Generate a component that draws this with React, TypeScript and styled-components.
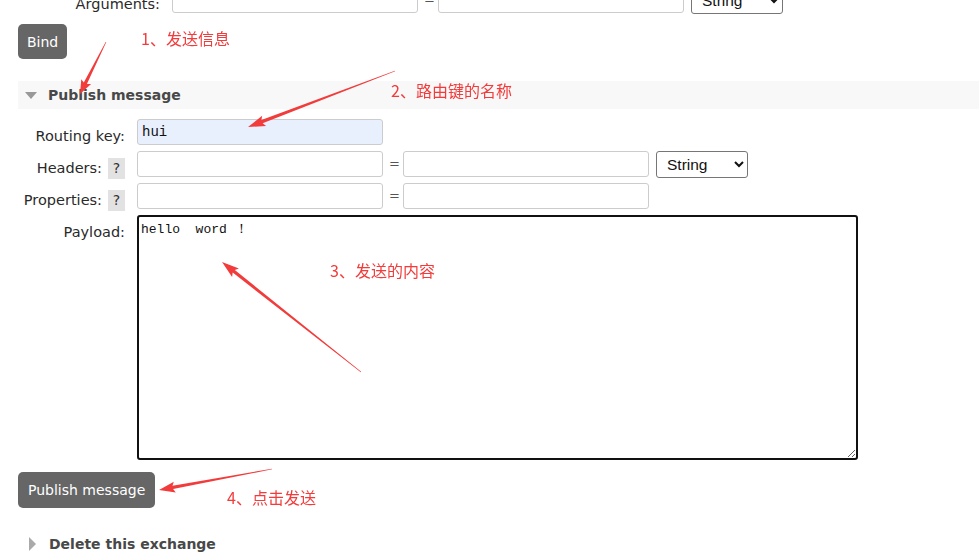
import React from "react";
import styled, { createGlobalStyle } from "styled-components";

const GlobalStyle = createGlobalStyle`
  html, body {
    margin: 0;
    padding: 0;
    background: #fff;
    overflow: hidden;
  }
  body {
    font-family: "DejaVu Sans", Verdana, sans-serif;
    font-size: 14px;
    color: #444;
  }
`;

type Arrow = { tail: [number, number]; tip: [number, number]; head: number };

const arrows: Arrow[] = [
  { tail: [106, 42], tip: [80, 94], head: 12 },
  { tail: [395, 71], tip: [248, 127], head: 15 },
  { tail: [361, 372], tip: [222, 262], head: 15 },
  { tail: [272, 469], tip: [159, 490], head: 14 },
];

const notes = [
  { text: "1、发送信息", x: 141, y: 29 },
  { text: "2、路由键的名称", x: 391, y: 81 },
  { text: "3、发送的内容", x: 330, y: 261 },
  { text: "4、点击发送", x: 227, y: 488 },
];

function arrowPoints({ tail, tip, head }: Arrow) {
  const dx = tip[0] - tail[0];
  const dy = tip[1] - tail[1];
  const len = Math.hypot(dx, dy);
  const ux = dx / len;
  const uy = dy / len;
  const nx = -uy;
  const ny = ux;
  const bx = tip[0] - ux * head;
  const by = tip[1] - uy * head;
  const wx = tip[0] - ux * head * 1.15;
  const wy = tip[1] - uy * head * 1.15;
  const p = (x: number, y: number) => `${x.toFixed(1)},${y.toFixed(1)}`;
  return [
    p(tail[0] + nx * 0.3, tail[1] + ny * 0.3),
    p(bx + nx * 1.7, by + ny * 1.7),
    p(wx + nx * 5.5, wy + ny * 5.5),
    p(tip[0], tip[1]),
    p(wx - nx * 5.5, wy - ny * 5.5),
    p(bx - nx * 1.7, by - ny * 1.7),
    p(tail[0] - nx * 0.3, tail[1] - ny * 0.3),
  ].join(" ");
}

export default function App() {
  return (
    <>
      <GlobalStyle />
      <Page>
        <FormGrid labelWidth={142}>
          <Label>Arguments:</Label>
          <FieldRow>
            <TextInput />
            <Equals>=</Equals>
            <TextInput />
            <TypeSelect defaultValue="String">
              <option>String</option>
              <option>Number</option>
              <option>Boolean</option>
            </TypeSelect>
          </FieldRow>
        </FormGrid>
        <Button>Bind</Button>

        <SectionHeader open>
          <Triangle open />
          <span>Publish message</span>
        </SectionHeader>

        <FormGrid labelWidth={107} gap={6} top={10}>
          <Label>Routing key:</Label>
          <FieldRow>
            <TextInput mono filled defaultValue="hui" />
          </FieldRow>

          <Label>
            Headers:<Help>?</Help>
          </Label>
          <FieldRow>
            <TextInput />
            <Equals>=</Equals>
            <TextInput />
            <TypeSelect defaultValue="String">
              <option>String</option>
              <option>Number</option>
              <option>Boolean</option>
            </TypeSelect>
          </FieldRow>

          <Label>
            Properties:<Help>?</Help>
          </Label>
          <FieldRow>
            <TextInput />
            <Equals>=</Equals>
            <TextInput />
          </FieldRow>

          <Label>Payload:</Label>
          <FieldRow>
            <Payload defaultValue={"hello  word ！"} />
          </FieldRow>
        </FormGrid>

        <Button top={12}>Publish message</Button>

        <SectionHeader>
          <Triangle />
          <span>Delete this exchange</span>
        </SectionHeader>
      </Page>

      <Overlay>
        <svg width="979" height="556" viewBox="0 0 979 556">
          {arrows.map((a, i) => (
            <polygon key={i} points={arrowPoints(a)} fill="#f23b3b" />
          ))}
        </svg>
        {notes.map((n) => (
          <Note key={n.text} style={{ left: n.x, top: n.y }}>
            {n.text}
          </Note>
        ))}
      </Overlay>
    </>
  );
}

const Page = styled.div`
  margin-top: -13px;
  padding: 0 18px;
  display: flex;
  flex-direction: column;
  align-items: flex-start;
`;

const FormGrid = styled.div<{ labelWidth: number; gap?: number; top?: number }>`
  display: grid;
  grid-template-columns: ${(p) => p.labelWidth}px auto;
  column-gap: 12px;
  row-gap: ${(p) => p.gap ?? 0}px;
  margin-top: ${(p) => p.top ?? 0}px;
`;

const Label = styled.div`
  box-sizing: border-box;
  height: 26px;
  display: flex;
  justify-content: flex-end;
  align-items: flex-start;
  padding-top: 9px;
  line-height: 17px;
  font-size: 14.5px;
  color: #2a2a2a;
  white-space: nowrap;
`;

const Help = styled.span`
  flex: none;
  width: 17px;
  height: 21px;
  line-height: 21px;
  margin: -2px 0 0 6px;
  background: #e2e2e2;
  color: #333;
  text-align: center;
  font-size: 14px;
`;

const FieldRow = styled.div`
  display: flex;
  align-items: flex-start;
  gap: 6px;
`;

const TextInput = styled.input<{ mono?: boolean; filled?: boolean }>`
  box-sizing: border-box;
  width: 246px;
  height: 26px;
  border: 1px solid #ccc;
  border-radius: 3px;
  padding: 0 4px;
  background: ${(p) => (p.filled ? "#e8f0fe" : "#fff")};
  font-family: ${(p) =>
    p.mono ? '"Liberation Mono", monospace' : '"DejaVu Sans", sans-serif'};
  font-size: ${(p) => (p.mono ? 14 : 13)}px;
  color: #111;
  outline: none;
`;

const Equals = styled.span`
  width: 8px;
  height: 26px;
  line-height: 26px;
  text-align: center;
  color: #555;
  font-size: 13px;
`;

const TypeSelect = styled.select`
  box-sizing: border-box;
  width: 92px;
  height: 27px;
  margin: 0 0 -1px 1px;
  border: 1px solid #767676;
  border-radius: 3px;
  background: #fff;
  padding: 0 6px;
  font-family: "Liberation Sans", Arial, sans-serif;
  font-size: 15.5px;
  color: #111;
`;

const Payload = styled.textarea`
  box-sizing: border-box;
  width: 721px;
  height: 245px;
  border: 2px solid #111;
  border-radius: 3px;
  padding: 5px 2px;
  font-family: "Liberation Mono", monospace;
  font-size: 13px;
  line-height: 16px;
  color: #111;
  outline: none;
  resize: both;
`;

const Button = styled.button<{ top?: number }>`
  margin-top: ${(p) => p.top ?? 11}px;
  height: ${(p) => (p.top ? 36 : 35)}px;
  padding: 0 ${(p) => (p.top ? 10 : 9)}px;
  border: none;
  border-radius: 5px;
  background: #666;
  color: #fff;
  font-family: "DejaVu Sans", Verdana, sans-serif;
  font-size: 14px;
`;

const SectionHeader = styled.div<{ open?: boolean }>`
  box-sizing: border-box;
  align-self: stretch;
  margin-right: -18px;
  margin-top: ${(p) => (p.open ? 22 : 22)}px;
  height: 28px;
  display: flex;
  align-items: center;
  gap: ${(p) => (p.open ? 11 : 13)}px;
  padding-left: ${(p) => (p.open ? 7 : 11)}px;
  background: ${(p) => (p.open ? "#f8f8f8" : "#fff")};
  font-weight: bold;
  font-size: 14px;
  color: #484848;
`;

const Triangle = styled.span<{ open?: boolean }>`
  width: 0;
  height: 0;
  ${(p) =>
    p.open
      ? `border-left: 6px solid transparent;
         border-right: 6px solid transparent;
         border-top: 7px solid #999;`
      : `border-top: 7px solid transparent;
         border-bottom: 7px solid transparent;
         border-left: 7px solid #aaa;`}
`;

const Overlay = styled.div`
  position: fixed;
  inset: 0;
  pointer-events: none;
  svg {
    position: absolute;
    left: 0;
    top: 0;
  }
`;

const Note = styled.span`
  position: absolute;
  font-family: "Noto Sans CJK SC", sans-serif;
  font-size: 16px;
  line-height: 18px;
  color: #f23b3b;
  white-space: nowrap;
`;
